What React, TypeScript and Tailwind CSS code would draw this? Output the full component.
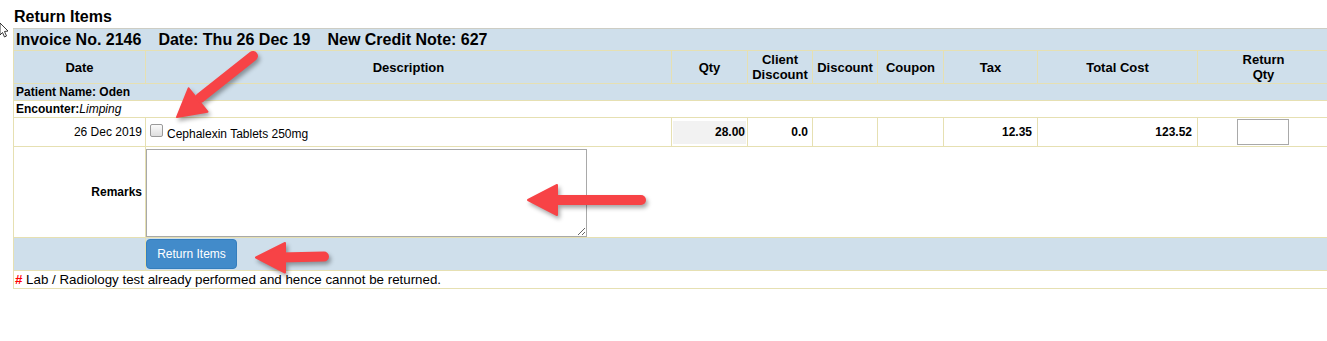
import React from 'react';

const border = 'border border-[#e6e0b2]';
const blue = 'bg-[#cfdfeb]';

const Arrows: React.FC = () => (
  <svg
    className="absolute left-0 top-0 pointer-events-none"
    width={1327}
    height={341}
    style={{ filter: 'drop-shadow(2px 3px 2px rgba(0,0,0,0.35))' }}
  >
    <g fill="#f74346" stroke="#f74346" strokeLinecap="round" strokeLinejoin="round">
      {/* arrow to checkbox */}
      <line x1={253} y1={56} x2={200} y2={98} strokeWidth={10} />
      <polygon points="177,117 188.6,88.3 207.4,111.7" strokeWidth={2} />
      {/* arrow to remarks */}
      <line x1={641} y1={200} x2={552} y2={200} strokeWidth={10} />
      <polygon points="528,200 557,185 557,215" strokeWidth={2} />
      {/* arrow to button */}
      <line x1={324} y1={256.5} x2={280} y2={257.5} strokeWidth={10} />
      <polygon points="256,257.5 285,243 285,272.5" strokeWidth={2} />
    </g>
  </svg>
);

const Cursor: React.FC = () => (
  <svg className="absolute left-0 top-[22px] pointer-events-none" width={10} height={18}>
    <polygon
      points="0,1 8,9 4.5,9.5 6.5,14 4.5,15 2.5,10.5 0,13"
      fill="#fff"
      stroke="#222"
      strokeWidth={0.9}
      strokeLinejoin="round"
    />
  </svg>
);

export default function App() {
  return (
    <div className="relative w-[1327px] h-[341px] overflow-hidden bg-white text-black font-['Liberation_Sans',Arial,sans-serif]">
      <div className="pl-[13px]">
        <div className="pl-[1px] pt-[8px] h-[28px] text-[16px] leading-[18px] font-bold">Return Items</div>
        <table className="table-fixed border-collapse w-[1316px] text-[12px] leading-[14px]">
          <colgroup>
            <col className="w-[132px]" />
            <col className="w-[526px]" />
            <col className="w-[76px]" />
            <col className="w-[65px]" />
            <col className="w-[65px]" />
            <col className="w-[66px]" />
            <col className="w-[94px]" />
            <col className="w-[160px]" />
            <col className="w-[132px]" />
          </colgroup>
          <tbody>
            <tr className="h-[22px]">
              <td colSpan={9} className={`${border} border-t-[#cdcdc4] ${blue} pl-[2px] text-[16px] leading-[18px] font-bold align-middle`}>
                <span>Invoice No. 2146</span>
                <span className="ml-[17px]">Date: Thu 26 Dec 19</span>
                <span className="ml-[17px]">New Credit Note: 627</span>
              </td>
            </tr>
            <tr className="h-[33px] text-[13px] leading-[15px] font-bold">
              <th className={`${border} ${blue} font-bold`}>Date</th>
              <th className={`${border} ${blue} font-bold`}>Description</th>
              <th className={`${border} ${blue} font-bold`}>Qty</th>
              <th className={`${border} ${blue} font-bold`}>Client<br />Discount</th>
              <th className={`${border} ${blue} font-bold`}>Discount</th>
              <th className={`${border} ${blue} font-bold`}>Coupon</th>
              <th className={`${border} ${blue} font-bold`}>Tax</th>
              <th className={`${border} ${blue} font-bold`}>Total Cost</th>
              <th className={`${border} ${blue} font-bold`}>Return<br />Qty</th>
            </tr>
            <tr className="h-[17px]">
              <td colSpan={9} className={`${border} ${blue} pl-[2px] font-bold`}>Patient Name: Oden</td>
            </tr>
            <tr className="h-[17px]">
              <td colSpan={9} className={`${border} pl-[2px]`}>
                <b>Encounter:</b>
                <i>Limping</i>
              </td>
            </tr>
            <tr className="h-[29px]">
              <td className={`${border} text-right pr-[3px]`}>26 Dec 2019</td>
              <td className={`${border} pl-0`}>
                <div className="flex items-center">
                  <input
                    type="checkbox"
                    className="appearance-none w-[13px] h-[13px] ml-[4px] mr-[4px] -mt-[3px] rounded-[2px] border border-[#9a9a9a] bg-gradient-to-b from-[#fbfbfb] to-[#dedede]"
                  />
                  <span className="mt-[3px]">Cephalexin Tablets 250mg</span>
                </div>
              </td>
              <td className={`${border} p-[1px]`}>
                <div className="h-[23px] bg-[#f2f2f2] text-right pr-[1px] font-bold leading-[23px]">28.00</div>
              </td>
              <td className={`${border} text-right pr-[4px] font-bold`}>0.0</td>
              <td className={border}></td>
              <td className={border}></td>
              <td className={`${border} text-right pr-[5px] font-bold`}>12.35</td>
              <td className={`${border} text-right pr-[5px] font-bold`}>123.52</td>
              <td className={`${border} text-center pr-[2px]`}>
                <input type="text" className="w-[52px] h-[26px] border border-[#a9a9a9] bg-white align-middle" />
              </td>
            </tr>
            <tr className="h-[91px]">
              <td className={`${border} text-right pr-[3px] font-bold`}>Remarks</td>
              <td colSpan={8} className={`${border} pl-0 pt-[1px]`}>
                <textarea className="block w-[441px] h-[88px] border border-[#a9a9a9] bg-white" />
              </td>
            </tr>
            <tr className="h-[33px]">
              <td className={`${border} ${blue}`}></td>
              <td colSpan={8} className={`${border} ${blue} pl-0`}>
                <button className="block w-[91px] h-[30px] rounded-[4px] border border-[#357ebd] bg-[#428bca] text-white text-[12px]">
                  Return Items
                </button>
              </td>
            </tr>
            <tr className="h-[18px]">
              <td colSpan={9} className={`${border} pl-[1px] text-[13.33px] leading-[15px]`}>
                <span className="text-[#ff0000] font-bold">#</span> Lab / Radiology test already performed and hence cannot be returned.
              </td>
            </tr>
          </tbody>
        </table>
      </div>
      <Arrows />
      <Cursor />
    </div>
  );
}
